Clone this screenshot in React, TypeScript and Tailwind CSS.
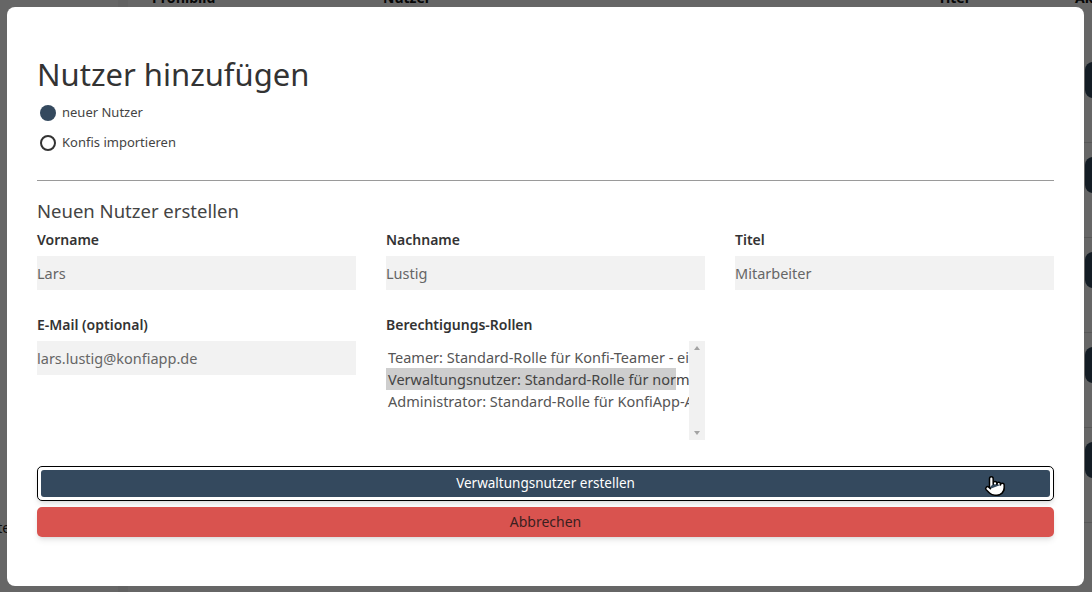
import { Pointer } from 'lucide-react';

const roles = [
  'Teamer: Standard-Rolle für Konfi-Teamer - eingeschränkte Rechte',
  'Verwaltungsnutzer: Standard-Rolle für normale Verwaltungsnutzer',
  'Administrator: Standard-Rolle für KonfiApp-Administratoren',
];

function Field({ label, value }: { label: string; value: string }) {
  return (
    <div className="flex flex-col">
      <label className="h-[20px] text-[14px] leading-[20px] font-semibold text-[#333]">{label}</label>
      <div className="mt-[6px] h-[34px] bg-[#f2f2f2] text-[14.5px] leading-[34px] text-[#666]">{value}</div>
    </div>
  );
}

function Radio({ checked, label }: { checked?: boolean; label: string }) {
  return (
    <div className="flex h-[30px] items-center">
      <span
        className={
          checked
            ? 'ml-[3px] h-[16px] w-[16px] rounded-full bg-[#34495e]'
            : 'ml-[3px] h-[16px] w-[16px] rounded-full border-2 border-[#333] bg-white'
        }
      />
      <span className="ml-[6px] text-[13px] text-[#444]">{label}</span>
    </div>
  );
}

function BackgroundPage() {
  const rows = [0, 1, 2, 3, 4];
  return (
    <div className="flex h-full">
      <aside className="w-[128px] shrink-0 overflow-hidden border-r-[10px] border-[#f4f4f4] bg-white pt-[517px]">
        <div className="-ml-[22px] whitespace-nowrap text-[14px] text-[#222]">Seite</div>
      </aside>
      <main className="flex-1 overflow-hidden">
        <div className="-mt-[12px] flex h-[60px] text-[14px] leading-[20px] font-bold whitespace-nowrap text-[#111]">
          <span className="ml-[24px] w-[231px] shrink-0">Profilbild</span>
          <span className="w-[555px] shrink-0">Nutzer</span>
          <span className="w-[137px] shrink-0">Titel</span>
          <span className="shrink-0">Aktionen</span>
        </div>
        {rows.map((r) => (
          <div key={r} className="flex h-[95px] justify-end border-b border-[#ddd]">
            <div className="mt-[14px] -mr-[33px] h-[36px] w-[40px] rounded-lg bg-[#34495e]" />
          </div>
        ))}
      </main>
    </div>
  );
}

export default function App() {
  return (
    <div className="relative h-[592px] w-[1092px] overflow-hidden bg-white font-['Noto_Sans',sans-serif]">
      <BackgroundPage />
      <div className="absolute inset-0 flex bg-black/60 pt-[7px] pl-[7px] pr-[8px] pb-[6px]">
        <div className="flex flex-1 flex-col rounded-lg bg-white px-[30px] pt-[49px]">
          <h1 className="text-[31px] leading-[36px] font-normal text-[#333]">Nutzer hinzufügen</h1>
          <div className="mt-[6px] flex flex-col">
            <Radio checked label="neuer Nutzer" />
            <Radio label="Konfis importieren" />
          </div>
          <hr className="mt-[22px] border-t border-[#9a9a9a]" />
          <h2 className="mt-[18px] text-[18.5px] leading-[24px] text-[#444]">Neuen Nutzer erstellen</h2>
          <div className="mt-[7px] grid grid-cols-3 gap-x-[30px] gap-y-[25px]">
            <Field label="Vorname" value="Lars" />
            <Field label="Nachname" value="Lustig" />
            <Field label="Titel" value="Mitarbeiter" />
            <Field label="E-Mail (optional)" value="lars.lustig@konfiapp.de" />
            <div className="flex flex-col">
              <label className="h-[20px] text-[14px] leading-[20px] font-semibold text-[#333]">Berechtigungs-Rollen</label>
              <div className="mt-[6px] flex h-[99px] bg-white">
                <div className="flex-1 overflow-hidden pt-[5px]">
                  {roles.map((role, i) => (
                    <div
                      key={role}
                      className={
                        i === 1
                          ? 'w-[290px] whitespace-nowrap bg-[#cecece] pl-[2px] text-[14.5px] leading-[22px] text-[#444]'
                          : 'w-[290px] whitespace-nowrap pl-[2px] text-[14.5px] leading-[22px] text-[#555]'
                      }
                    >
                      {role}
                    </div>
                  ))}
                </div>
                <div className="flex w-[16px] flex-col items-center justify-between bg-[#f1f1f1] py-[5px]">
                  <span className="h-0 w-0 border-x-[3.5px] border-b-[4px] border-x-transparent border-b-[#a3a3a3]" />
                  <span className="h-0 w-0 border-x-[3.5px] border-t-[4px] border-x-transparent border-t-[#a3a3a3]" />
                </div>
              </div>
            </div>
            <div />
          </div>
          <div className="mt-[26px] flex flex-col gap-[6px]">
            <div className="rounded-[5px] border border-black bg-white p-[3px] shadow-md">
              <button className="block h-[27px] w-full rounded-[3px] bg-[#34495e] text-[13.5px] text-white">
                Verwaltungsnutzer erstellen
              </button>
            </div>
            <button className="h-[30px] w-full rounded-[5px] bg-[#d9534f] text-[14px] leading-[28px] text-[#3b1f1f] shadow-md">
              Abbrechen
            </button>
          </div>
        </div>
      </div>
      <Pointer className="absolute left-[984px] top-[475px] h-[22px] w-[22px] fill-white text-black" strokeWidth={1.6} />
    </div>
  );
}
